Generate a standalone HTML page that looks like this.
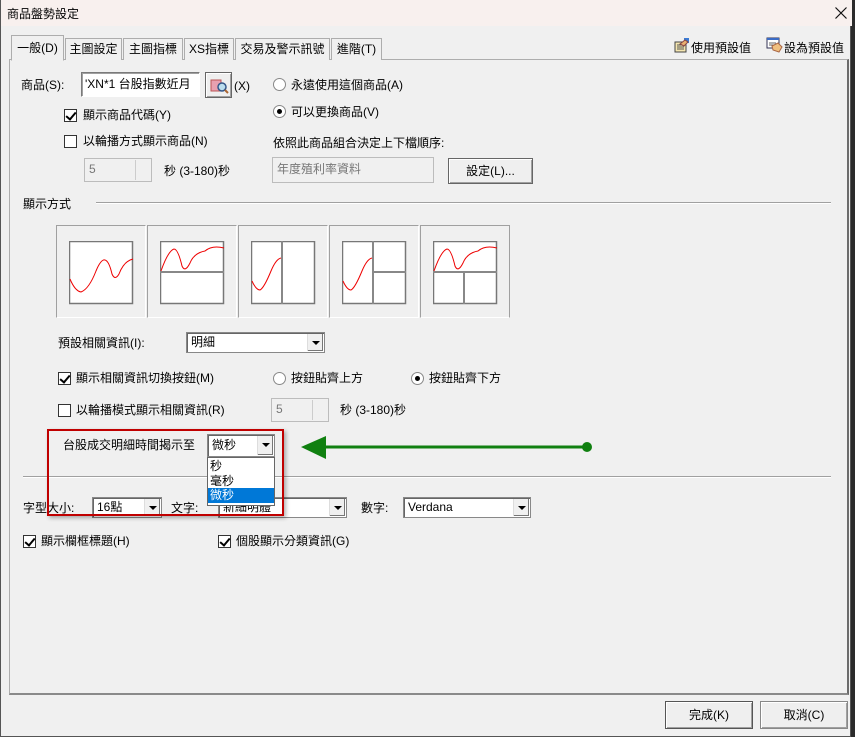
<!DOCTYPE html>
<html><head><meta charset="utf-8"><style>
*{box-sizing:border-box;margin:0;padding:0}
body{width:855px;height:737px;background:#2b2b2b;position:relative;overflow:hidden;font-family:"Liberation Sans","Noto Sans CJK TC",sans-serif;font-size:12px;color:#000}
.a{position:absolute;white-space:nowrap}
.win{position:absolute;left:0;top:0;width:851px;height:737px;background:#f0f0f0;border:1px solid #555;border-top:none}
.title{position:absolute;left:0;top:0;width:851px;height:26px;background:#f8f0ee}
.tab{position:absolute;top:38px;height:22px;border:1px solid #adadad;border-bottom:none;background:#f0f0f0;text-align:center;line-height:20px;font-size:12px}
.panel{position:absolute;left:8px;top:59px;width:840px;height:636px;border:1px solid #adadad;border-right:2px solid #6b6b6b;border-bottom:2px solid #8a8a8a;background:#f0f0f0}
.cb{position:absolute;width:13px;height:13px;border:1px solid #333;background:#fff}
.cb.on::after{content:"";position:absolute;left:3px;top:0px;width:4px;height:8px;border:solid #000;border-width:0 2px 2px 0;transform:rotate(40deg)}
.rb{position:absolute;width:13px;height:13px;border-radius:50%;border:1px solid #888;background:#fff}
.rb.on::after{content:"";position:absolute;left:3px;top:3px;width:5px;height:5px;border-radius:50%;background:#000}
.inp{position:absolute;background:#fff;border:1px solid;border-color:#7a7a7a #fff #fff #7a7a7a;box-shadow:inset 1px 1px 0 #a0a0a0;padding-left:4px;line-height:20px}
.dis{background:#f0f0f0;color:#777;border:1px solid #bcbcbc;box-shadow:none}
.sel{position:absolute;background:#fff;border:1px solid #888;box-shadow:inset 1px 1px 0 #666;padding-left:4px;line-height:18px}
.sel i{position:absolute;right:1px;top:1px;bottom:1px;width:16px;background:#f0f0f0;border-left:1px solid #ddd;box-shadow:inset -1px -1px 0 #777}
.sel i::after{content:"";position:absolute;left:4px;top:7px;border:4px solid transparent;border-top:4px solid #000;border-bottom:none}
.btn{position:absolute;background:#efefef;border:1px solid #666;box-shadow:inset 1px 1px 0 #fff,inset -1px -1px 0 #a0a0a0;text-align:center;font-size:12px}
.lay{position:absolute;top:225px;width:90px;height:93px;border:1px solid #a0a0a0;border-right-color:#fff;border-bottom-color:#fff}
.lay svg{position:absolute;left:12px;top:15px}
.hr{position:absolute;height:2px;border-top:1px solid #a0a0a0;border-bottom:1px solid #fff}
</style></head><body>
<div class="win">
<div class="title"></div>
<div class="a" style="left:6px;top:5px;font-size:12px">商品盤勢設定</div>
<svg class="a" style="left:834px;top:7px" width="12" height="12"><path d="M0.5 0.5L11.5 11.5M11.5 0.5L0.5 11.5" stroke="#111" stroke-width="1.2"/></svg>

<div class="panel"></div>
<div class="tab" style="left:10px;top:35px;width:53px;height:26px;border-bottom:1px solid #f0f0f0;line-height:24px;z-index:2">一般(D)</div>
<div class="tab" style="left:64px;width:57px">主圖設定</div>
<div class="tab" style="left:122px;width:60px">主圖指標</div>
<div class="tab" style="left:183px;width:50px">XS指標</div>
<div class="tab" style="left:234px;width:95px">交易及警示訊號</div>
<div class="tab" style="left:330px;width:51px">進階(T)</div>

<svg class="a" style="left:673px;top:38px" width="16" height="15"><rect x="1" y="4" width="11" height="10" fill="#f5e6b0" stroke="#444"/><path d="M3 7h7M3 9h7M3 11h7" stroke="#555"/><rect x="10" y="0" width="5" height="5" fill="#3a7bd5"/><path d="M6 6l5-4 3 2-4 4z" fill="#e8b070" stroke="#844"/></svg>
<div class="a" style="left:690px;top:39px">使用預設值</div>
<svg class="a" style="left:765px;top:37px" width="17" height="16"><rect x="1" y="1" width="12" height="10" fill="#fff" stroke="#335"/><rect x="1" y="1" width="12" height="2" fill="#3a6bc5"/><path d="M3 6h7M3 8h7" stroke="#666"/><path d="M6 9l6-3 4 4-3 5-6-2z" fill="#f0c080" stroke="#a64"/></svg>
<div class="a" style="left:783px;top:39px">設為預設值</div>

<div class="a" style="left:20px;top:76px">商品(S):</div>
<div class="inp" style="left:80px;top:72px;width:119px;height:25px;line-height:22px;padding-left:3px">'XN*1 台股指數近月</div>
<div class="btn" style="left:204px;top:72px;width:27px;height:26px"></div>
<svg class="a" style="left:208px;top:75px" width="20" height="20"><rect x="2" y="5" width="10" height="11" fill="#e9a0b0" stroke="#b55"/><circle cx="13" cy="12" r="4" fill="#bde" stroke="#358" stroke-width="1.5"/><path d="M16 15l3 3" stroke="#a63" stroke-width="2"/></svg>
<div class="a" style="left:233px;top:79px">(X)</div>
<div class="rb" style="left:272px;top:78px"></div>
<div class="a" style="left:290px;top:76px">永遠使用這個商品(A)</div>
<div class="rb on" style="left:272px;top:105px"></div>
<div class="a" style="left:290px;top:103px">可以更換商品(V)</div>
<div class="cb on" style="left:63px;top:109px"></div>
<div class="a" style="left:82px;top:106px">顯示商品代碼(Y)</div>
<div class="cb" style="left:63px;top:135px"></div>
<div class="a" style="left:82px;top:132px">以輪播方式顯示商品(N)</div>
<div class="inp dis" style="left:83px;top:158px;width:68px;height:24px">5</div>
<div class="a" style="left:134px;top:160px;width:15px;height:20px;border-left:1px solid #ccc"></div>
<div class="a" style="left:163px;top:162px">秒 (3-180)秒</div>
<div class="a" style="left:272px;top:134px">依照此商品組合決定上下檔順序:</div>
<div class="inp dis" style="left:271px;top:157px;width:162px;height:26px;line-height:22px">年度殖利率資料</div>
<div class="btn" style="left:447px;top:158px;width:85px;height:26px;line-height:24px">設定(L)...</div>

<div class="a" style="left:22px;top:195px">顯示方式</div>
<div class="hr" style="left:95px;top:202px;width:735px"></div>

<div class="lay" style="left:55px"><svg width="65" height="64"><rect x="0.5" y="0.5" width="63" height="62" fill="#fff" stroke="#777" stroke-width="1.5"/><path d="M1 38 Q6 50 12 51 Q20 48 27 30 Q32 18 36 19 Q40 20 43 33 Q46 40 50 33 Q55 20 64 18" fill="none" stroke="#e00"/></svg></div>
<div class="lay" style="left:146px"><svg width="65" height="64"><rect x="0.5" y="0.5" width="63" height="62" fill="#fff" stroke="#777" stroke-width="1.5"/><path d="M0 31h64" stroke="#888" stroke-width="2"/><path d="M1 30 Q8 10 14 8 Q18 8 22 25 Q25 32 30 22 Q34 12 45 10 Q52 4 64 7" fill="none" stroke="#e00"/></svg></div>
<div class="lay" style="left:237px"><svg width="65" height="64"><rect x="0.5" y="0.5" width="63" height="62" fill="#fff" stroke="#777" stroke-width="1.5"/><path d="M31 0v63" stroke="#888" stroke-width="2"/><path d="M1 40 Q5 49 9 49 Q13 47 20 30 Q25 18 30 17" fill="none" stroke="#e00"/></svg></div>
<div class="lay" style="left:328px"><svg width="65" height="64"><rect x="0.5" y="0.5" width="63" height="62" fill="#fff" stroke="#777" stroke-width="1.5"/><path d="M31 0v63M31 31h33" stroke="#888" stroke-width="2"/><path d="M1 40 Q5 49 9 49 Q13 47 20 30 Q25 18 30 17" fill="none" stroke="#e00"/></svg></div>
<div class="lay" style="left:419px;border-right-color:#a0a0a0"><svg width="65" height="64"><rect x="0.5" y="0.5" width="63" height="62" fill="#fff" stroke="#777" stroke-width="1.5"/><path d="M0 31h64M31 31v32" stroke="#888" stroke-width="2"/><path d="M1 30 Q8 10 14 8 Q18 8 22 25 Q25 32 30 22 Q34 12 45 10 Q52 4 64 7" fill="none" stroke="#e00"/></svg></div>

<div class="a" style="left:57px;top:334px">預設相關資訊(I):</div>
<div class="sel" style="left:185px;top:332px;width:139px;height:21px">明細<i></i></div>
<div class="cb on" style="left:57px;top:372px"></div>
<div class="a" style="left:75px;top:369px">顯示相關資訊切換按鈕(M)</div>
<div class="rb" style="left:272px;top:372px"></div>
<div class="a" style="left:290px;top:369px">按鈕貼齊上方</div>
<div class="rb on" style="left:410px;top:372px"></div>
<div class="a" style="left:428px;top:369px">按鈕貼齊下方</div>
<div class="cb" style="left:57px;top:404px"></div>
<div class="a" style="left:75px;top:401px">以輪播模式顯示相關資訊(R)</div>
<div class="inp dis" style="left:270px;top:398px;width:58px;height:24px">5</div>
<div class="a" style="left:311px;top:400px;width:15px;height:20px;border-left:1px solid #ccc"></div>
<div class="a" style="left:339px;top:401px">秒 (3-180)秒</div>

<div class="hr" style="left:22px;top:476px;width:808px"></div>

<div class="a" style="left:22px;top:499px">字型大小:</div>
<div class="sel" style="left:91px;top:497px;width:70px;height:21px">16點<i></i></div>
<div class="a" style="left:170px;top:499px">文字:</div>
<div class="sel" style="left:217px;top:497px;width:129px;height:21px">新細明體<i></i></div>
<div class="a" style="left:360px;top:499px">數字:</div>
<div class="sel" style="left:402px;top:497px;width:128px;height:21px">Verdana<i></i></div>

<div class="cb on" style="left:22px;top:535px"></div>
<div class="a" style="left:40px;top:532px">顯示欄框標題(H)</div>
<div class="cb on" style="left:217px;top:535px"></div>
<div class="a" style="left:235px;top:532px">個股顯示分類資訊(G)</div>

<div class="a" style="left:46px;top:429px;width:237px;height:87px;border:2px solid #c00000;box-shadow:2px 2px 4px rgba(0,0,0,.3)"></div>
<div class="a" style="left:62px;top:436px">台股成交明細時間揭示至</div>
<div class="sel" style="left:206px;top:434px;width:68px;height:23px;line-height:20px">微秒<i></i></div>
<div class="a" style="left:206px;top:457px;width:68px;height:49px;background:#fff;border:1px solid #666;line-height:14px">
<div style="padding-left:2px;height:15px;margin-top:1px">秒</div>
<div style="padding-left:2px;height:14px">毫秒</div>
<div style="padding-left:2px;height:15px;background:#0078d7;color:#fff">微秒</div></div>
<svg class="a" style="left:298px;top:434px" width="296" height="28"><path d="M2 13L27 2v23z" fill="#108010"/><path d="M25 13H288" stroke="#108010" stroke-width="3"/><circle cx="288" cy="13" r="5" fill="#108010"/></svg>

<div class="btn" style="left:664px;top:701px;width:88px;height:28px;line-height:26px;border-color:#555">完成(K)</div>
<div class="btn" style="left:759px;top:701px;width:88px;height:28px;line-height:26px;border-color:#888">取消(C)</div>
</div>
</body></html>
